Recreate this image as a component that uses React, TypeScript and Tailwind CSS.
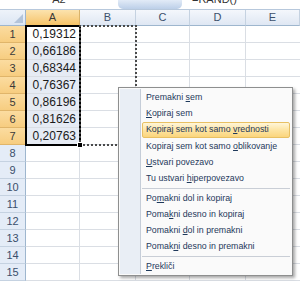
import React from 'react';

const values = ['0,19312', '0,66186', '0,68344', '0,76367', '0,86196', '0,81626', '0,20763'];
const cols = ['A', 'B', 'C', 'D', 'E'];

type Item = { pre: string; key: string; post: string; active?: boolean };

const groups: Item[][] = [
  [
    { pre: 'Premakni ', key: 's', post: 'em' },
    { pre: '', key: 'K', post: 'opiraj sem' },
    { pre: 'Kopiraj sem kot samo ', key: 'v', post: 'rednosti', active: true },
    { pre: 'Kopiraj sem kot samo ', key: 'o', post: 'blikovanje' },
    { pre: '', key: 'U', post: 'stvari povezavo' },
    { pre: 'Tu ustvari ', key: 'h', post: 'iperpovezavo' },
  ],
  [
    { pre: 'Po', key: 'm', post: 'akni dol in kopiraj' },
    { pre: 'Poma', key: 'k', post: 'ni desno in kopiraj' },
    { pre: 'Pomakni ', key: 'd', post: 'ol in premakni' },
    { pre: 'Pomak', key: 'n', post: 'i desno in premakni' },
  ],
  [{ pre: '', key: 'P', post: 'rekliči' }],
];

const MenuRow = ({ item }: { item: Item }) => (
  <div
    className={`h-[16.3px] flex items-center pl-[3px] border rounded-[2px] ${
      item.active
        ? 'bg-gradient-to-b from-[#fff6d8] via-[#fde4a2] to-[#fbd57c] border-[#e8c063]'
        : 'border-transparent'
    }`}
  >
    <span className="text-[8.8px] leading-none text-[#1e395b] whitespace-nowrap">
      {item.pre}
      <span className="underline underline-offset-1">{item.key}</span>
      {item.post}
    </span>
  </div>
);

export default function App() {
  return (
    <div className="relative w-[300px] h-[281px] overflow-hidden bg-white font-['Liberation_Sans',Arial,sans-serif]">
      {/* formula bar, cut off at the top */}
      <div className="flex h-[10px] border-b border-[#b7c8dc] overflow-hidden">
        <div className="w-[118px] flex justify-center bg-white">
          <span className="text-[11px] leading-[11px] -mt-[6px] text-[#333]">A2</span>
        </div>
        <div className="w-[64px] rounded-b-[5px] bg-gradient-to-b from-[#e2ebf7] to-[#bccfe8]" />
        <div className="flex-1 pl-[10px] bg-white">
          <span className="block text-[11px] leading-[11px] -mt-[6px] text-[#333]">=RAND()</span>
        </div>
      </div>

      {/* sheet grid */}
      <div className="grid grid-cols-[26px_54px_56px_54px_56px_54px]">
        {/* header row */}
        <div className="h-[16px] relative bg-gradient-to-b from-[#eef3fa] to-[#dce6f3] border-r border-b border-[#9eb6ce]">
          <svg className="absolute right-[2px] bottom-[2px]" width="9" height="9" viewBox="0 0 9 9">
            <path d="M9 0 L9 9 L0 9 Z" fill="#b3c4da" />
          </svg>
        </div>
        {cols.map((c) => (
          <div
            key={c}
            className={`h-[16px] flex items-center justify-center text-[11px] border-r border-b ${
              c === 'A'
                ? 'bg-gradient-to-b from-[#fce3ae] to-[#f5c367] border-r-[#d9b36b] border-b-[#c89a4c] text-[#3a3a3a]'
                : 'bg-gradient-to-b from-[#f4f7fc] to-[#dfe7f3] border-r-[#c5d2e1] border-b-[#9eb6ce] text-[#3b4f6b]'
            }`}
          >
            {c}
          </div>
        ))}

        {/* rows */}
        {Array.from({ length: 15 }, (_, i) => i + 1).map((r) => (
          <React.Fragment key={r}>
            <div
              className={`h-[17px] flex items-center justify-center text-[11px] border-r border-b ${
                r <= 7
                  ? 'bg-gradient-to-b from-[#fbdca0] to-[#f7cd80] border-r-[#c89a4c] border-b-[#e0b56a] text-[#3a3a3a]'
                  : 'bg-[#e4ecf7] border-r-[#9eb6ce] border-b-[#c5d2e1] text-[#3b4f6b]'
              }`}
            >
              {r}
            </div>
            <div
              className={`h-[17px] flex items-center justify-end pr-[3px] text-[12px] text-[#1a1a1a] border-r border-b border-[#dadee4] ${
                r >= 2 && r <= 7 ? 'bg-[#e6ebf4]' : 'bg-white'
              }`}
            >
              {r <= 7 ? values[r - 1] : ''}
            </div>
            <div className="h-[17px] border-r border-b border-[#dadee4]" />
            <div className="h-[17px] border-r border-b border-[#dadee4]" />
            <div className="h-[17px] border-r border-b border-[#dadee4]" />
            <div className="h-[17px] border-b border-[#dadee4]" />
          </React.Fragment>
        ))}
      </div>

      {/* selection A1:A7 */}
      <div className="absolute left-[25px] top-[25px] w-[56px] h-[121px] border-2 border-black pointer-events-none" />
      {/* drop marquee B1:B7 */}
      <div className="absolute left-[79px] top-[25px] w-[58px] h-[121px] border-2 border-dotted border-[#4a4a4a] pointer-events-none" />
      {/* fill handle */}
      <div className="absolute left-[77px] top-[142px] w-[6px] h-[6px] bg-black border border-white" />

      {/* context menu */}
      <div className="absolute left-[118px] top-[87px] w-[175px] bg-[#fafafa] border border-[#8e8f8f] p-[1px] shadow-[2px_2px_3px_rgba(0,0,0,0.35)] flex">
        <div className="w-[21px] bg-[#e9eef5] border-r border-[#c5cdd8]" />
        <div className="flex-1 flex flex-col pl-[1px] pr-[1px] bg-[#fafafa]">
          {groups.map((g, gi) => (
            <React.Fragment key={gi}>
              {gi > 0 && <div className="h-[2px] border-t border-[#c9ced6] mt-[1px]" />}
              {g.map((it) => (
                <MenuRow key={it.pre + it.key + it.post} item={it} />
              ))}
            </React.Fragment>
          ))}
        </div>
      </div>
    </div>
  );
}
